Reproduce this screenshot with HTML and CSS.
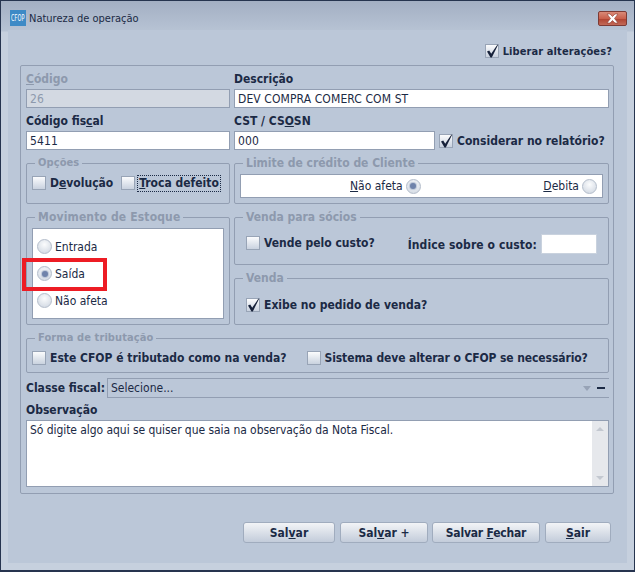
FILE: index.html
```html
<!DOCTYPE html>
<html lang="pt-BR">
<head>
<meta charset="utf-8">
<title>Natureza de operação</title>
<link rel="stylesheet" href="styles.css">
</head>
<body>
<div class="window">
  <header class="titlebar">
    <span class="app-icon"><span class="app-text">CFOP</span></span>
    <span class="title">Natureza de operação</span>
    <span class="close"><svg width="17" height="11" viewBox="0 0 17 11"><path d="M3 1h3l2.500 2.500L11 1h3l-3.500 4.500L14 10h-3L8.500 7.500 6 10H3l3.500-4.500z" fill="#fff" stroke="#8a3a30" stroke-width=".6"/></svg></span>
  </header>
  <main class="content">
    <div class="top-row">
      <label class="check bold small"><span class="box"><svg class="tick" viewBox="0 0 14 14"><path d="M2 7.500L4.200 6.500L6.200 9.800L12.500 .5L13 1L6.800 13.500H5.500z" /></svg></span><span>Liberar alterações?</span></label>
    </div>
    <section class="panel">
      <div class="two">
        <div class="field"><label class="lbl disabled"><u>C</u>ódigo</label><div class="input ro">26</div></div>
        <div class="field"><label class="lbl">Descrição</label><div class="input">DEV COMPRA COMERC COM ST</div></div>
      </div>
      <div class="two r2">
        <div class="field"><label class="lbl">Código fis<u>c</u>al</label><div class="input">5411</div></div>
        <div class="field">
          <label class="lbl">CST / CS<u>O</u>SN</label>
          <div class="inline">
            <div class="input cst">000</div>
            <label class="check bold"><span class="box"><svg class="tick" viewBox="0 0 14 14"><path d="M2 7.500L4.200 6.500L6.200 9.800L12.500 .5L13 1L6.800 13.500H5.500z" /></svg></span><span>Considerar no relatório?</span></label>
          </div>
        </div>
      </div>
      <div class="two r3">
        <div class="group opts">
          <span class="legend small">Opções</span>
          <label class="check bold"><span class="box"></span><span>D<u>e</u>volução</span></label>
          <label class="check bold c2"><span class="box"></span><span class="focus"><u>T</u>roca defeito</span></label>
        </div>
        <div class="group credit">
          <span class="legend">Limite de crédito de Cliente</span>
          <div class="white-row">
            <label class="radio-r"><span><u>N</u>ão afeta</span><span class="radio on"></span></label>
            <label class="radio-r"><span><u>D</u>ebita</span><span class="radio"></span></label>
          </div>
        </div>
      </div>
      <div class="two r3">
        <div class="group stock">
          <span class="legend wide">Movimento de Estoque</span>
          <div class="white-col">
            <label class="radio-l"><span class="radio"></span><span>Entrada</span></label>
            <label class="radio-l"><span class="radio on"></span><span>Saída</span></label>
            <label class="radio-l"><span class="radio"></span><span>Não afeta</span></label>
          </div>
          <span class="highlight"></span>
        </div>
        <div class="stack">
          <div class="group socios">
            <span class="legend">Venda para sócios</span>
            <label class="check bold"><span class="box"></span><span>Vende pelo custo?</span></label>
            <label class="index bold"><span class="index-text">Índice sobre o custo:</span><span class="input idx"></span></label>
          </div>
          <div class="group venda">
            <span class="legend">Venda</span>
            <label class="check bold"><span class="box"><svg class="tick" viewBox="0 0 14 14"><path d="M2 7.500L4.200 6.500L6.200 9.800L12.500 .5L13 1L6.800 13.500H5.500z" /></svg></span><span>Exibe no pedido de venda?</span></label>
          </div>
        </div>
      </div>
      <div class="group trib">
        <span class="legend small">Forma de tributação</span>
        <label class="check bold"><span class="box"></span><span>Este CFOP é tributado como na venda?</span></label>
        <label class="check bold tight"><span class="box"></span><span>Sistema deve alterar o CFOP se necessário?</span></label>
      </div>
      <div class="classe">
        <label class="bold">Classe fiscal:</label>
        <div class="select"><span>Selecione...</span><span class="arrow"></span><span class="minus"></span></div>
      </div>
      <label class="lbl obs-l">Observação</label>
      <div class="textarea">
        <div class="ta-text">Só digite algo aqui se quiser que saia na observação da Nota Fiscal.</div>
        <div class="scroll"><span class="up"></span><span class="down"></span></div>
      </div>
    </section>
    <footer class="buttons">
      <button class="btn b1">Sal<u>v</u>ar</button>
      <button class="btn b2">Sal<u>v</u>ar +</button>
      <button class="btn b3">Salvar <u>F</u>echar</button>
      <button class="btn b4"><u>S</u>air</button>
    </footer>
  </main>
</div>
</body>
</html>
```
FILE: styles.css
```css
* { box-sizing: border-box; }
html, body { margin: 0; padding: 0; }
body { font-family: "DejaVu Sans Condensed", "DejaVu Sans", sans-serif; font-size: 12px; color: #1b2a45; background: #fff; }
.window { width: 635px; height: 572px; border: 1px solid #26344f; border-bottom-width: 2px; background: linear-gradient(#a3afc3 0, #b7c3d4 30px, #c6d0de 31px); padding: 0 7px 7px 7px; display: flex; flex-direction: column; }
.titlebar { height: 29px; display: flex; align-items: center; flex: none; padding-top: 5px; position: relative; }
.app-icon { width: 16px; height: 16px; margin-left: 2px; background: #3d8ac6; flex: none; display: flex; align-items: center; justify-content: center; }
.app-text { color: #fff; font-size: 9px; line-height: 16px; transform: scaleX(.62); white-space: nowrap; }
.title { margin-left: 3px; font-size: 11px; }
.close { margin-left: auto; width: 29px; height: 15px; border: 1px solid #7d3a34; border-radius: 2px; background: linear-gradient(#d98a78, #c9604c 50%, #b04432 55%, #c26a58); display: flex; align-items: center; justify-content: center; }
.content { flex: 1; background: #bbc7d8; padding: 0 12px; display: flex; flex-direction: column; min-height: 0; }
.top-row { height: 35px; display: flex; justify-content: flex-end; padding: 14px 3px 0 0; }
.bold { font-weight: 700; }
.small { font-size: 11px; letter-spacing: .1px; }
.wide { letter-spacing: .15px; }
.tight { letter-spacing: -.1px; }
.check { display: inline-flex; align-items: center; gap: 4px; height: 14px; white-space: nowrap; }
.box { width: 14px; height: 14px; flex: none; border: 1px solid #98a4b6; background: linear-gradient(#fbfcfd, #c9d2df); position: relative; }
.tick { position: absolute; left: -1px; top: -1px; width: 14px; height: 14px; }
.tick path { fill: #16213a; }
.panel { width: 594px; height: 429px; border: 1px solid #929eb2; border-radius: 2px; padding: 6px 4px 0 5px; flex: none; }
.two { display: grid; grid-template-columns: 204px 375px; column-gap: 4px; }
.r2 { margin-top: 6px; }
.r3 { margin-top: 13px; }
.field { display: flex; flex-direction: column; min-width: 0; }
.lbl { display: block; height: 17px; line-height: 14px; font-weight: 700; }
.disabled { color: #8d99ad; }
.input { height: 19px; background: #fff; border: 1px solid #929eb2; padding: 0 3px; line-height: 19px; white-space: nowrap; letter-spacing: .1px; }
.ro { background: #d3d9e2; color: #8d99ad; }
.inline { display: flex; align-items: center; gap: 4px; }
.cst { width: 201px; flex: none; }
.group { border: 1px solid #929eb2; border-radius: 2px; position: relative; }
.legend { position: absolute; left: 8px; top: -8px; padding: 0 3px; background: #bbc7d8; color: #8d99ad; font-weight: 700; line-height: 14px; white-space: nowrap; }
.opts { height: 41px; padding: 12px 0 0 5px; display: flex; }
.c2 { margin-left: 8px; gap: 3px; }
.focus { outline: 1px dotted #1b2a45; outline-offset: 0; padding: 0 1px; line-height: 15px; }
.credit { height: 41px; padding: 10px 5px 0; }
.white-row { height: 24px; background: #fff; border: 1px solid #929eb2; display: flex; align-items: center; padding-right: 5px; }
.radio-r { display: inline-flex; align-items: center; gap: 3px; font-weight: 400; margin-left: 109px; }
.radio-r + .radio-r { margin-left: auto; }
.radio { width: 15px; height: 15px; border-radius: 50%; border: 1px solid #b4bdcb; background: radial-gradient(circle at 50% 35%, #fbfcfd, #ccd4df); flex: none; display: inline-block; position: relative; }
.radio.on::after { content: ""; position: absolute; left: 3.500px; top: 3.500px; width: 6px; height: 6px; border-radius: 50%; background: #6f83ab; box-shadow: 0 0 1px 1px #b9c4d6; }
.stock { height: 108px; padding: 10px 5px 0; }
.white-col { height: 91px; background: #fff; border: 1px solid #929eb2; display: flex; flex-direction: column; justify-content: center; gap: 12px; padding-left: 4px; }
.radio-l { display: flex; align-items: center; gap: 3px; height: 15px; }
.highlight { position: absolute; left: -5px; top: 40px; width: 85px; height: 33px; border: 4px solid #ed1c24; }
.stack { display: flex; flex-direction: column; gap: 13px; }
.socios { height: 48px; padding: 18px 11px 0; display: flex; align-items: flex-start; justify-content: space-between; }
.index { display: inline-flex; align-items: center; gap: 4px; margin-top: -2px; letter-spacing: .1px; }
.index-text { padding-top: 1px; }
.idx { width: 56px; height: 20px; border-color: #c9d2de; display: inline-block; }
.venda { height: 47px; padding: 19px 11px 0; }
.trib { height: 35px; margin-top: 13px; padding: 12px 5px 0; display: flex; gap: 20px; width: 583px; }
.classe { display: flex; align-items: center; gap: 5px; margin-top: 5px; height: 20px; width: 583px; }
.select { flex: 1; height: 20px; border: 1px solid #929eb2; border-width: 1px 0 1px 1px; padding: 0 0 0 3px; display: flex; align-items: center; font-weight: 400; margin-left: -3px; }
.arrow { margin-left: auto; width: 0; height: 0; border: 4px solid transparent; border-top: 5px solid #97a3b6; border-bottom: 0; }
.minus { width: 8px; height: 2px; background: #1b2a45; margin: 0 4px 0 6px; }
.obs-l { margin-top: 4px; height: 18px; line-height: 17px; }
.textarea { width: 583px; height: 67px; background: #fff; border: 1px solid #929eb2; display: flex; }
.ta-text { flex: 1; padding: 2px 3px; line-height: 14px; letter-spacing: -.06px; }
.scroll { width: 16px; background: #e6e8ec; display: flex; flex-direction: column; justify-content: space-between; align-items: center; padding: 6px 0 6px; }
.up { width: 0; height: 0; border: 4px solid transparent; border-bottom: 4px solid #c3c8d0; border-top: 0; }
.down { width: 0; height: 0; border: 4px solid transparent; border-top: 4px solid #c3c8d0; border-bottom: 0; }
.buttons { display: flex; margin-top: 28px; padding-left: 223px; gap: 5px; }
.btn { height: 21px; padding: 0; font: inherit; font-weight: 700; color: #1b2a45; border: 1px solid #a0acbe; border-radius: 3px; background: linear-gradient(#f2f4f7, #c3ccda); }
.b1 { width: 92px; }
.b2 { width: 88px; }
.b3 { width: 108px; margin-left: -1px; letter-spacing: -.2px; }
.b4 { width: 66px; }
```
